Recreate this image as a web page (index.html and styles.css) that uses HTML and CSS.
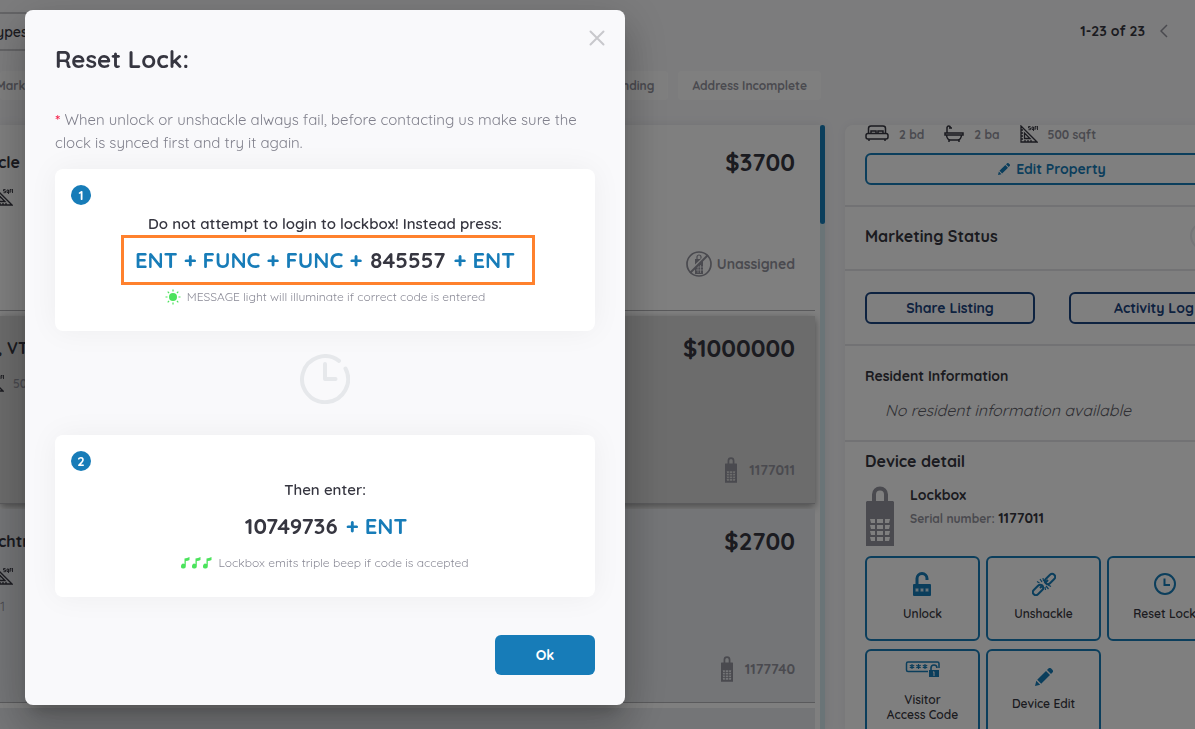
FILE: index.html
```html
<!DOCTYPE html>
<html lang="en">
<head>
    <meta charset="UTF-8">
    <meta name="viewport" content="width=device-width, initial-scale=1.0">
    <title>Reset Lock</title>
    <link rel="stylesheet" href="styles.css">
</head>
<body>
    <!-- shared icons -->
    <svg class="sprite" aria-hidden="true">
        <symbol id="lockbox" viewBox="0 0 28 60">
            <path d="M8 17V8.500a6 6 0 0 1 12 0V17" fill="none" stroke="currentColor" stroke-width="4"/>
            <path fill="currentColor" fill-rule="evenodd" d="M1 15h26l1 1v44H0V16zM4 33h5v4H5zM11 33h6v4h-6zM19 33h5l-1 4h-4zM4 39h5v4H5zM11 39h6v4h-6zM19 39h5l-1 4h-4zM4 45h5v4H5zM11 45h6v4h-6zM19 45h5l-1 4h-4zM4 51h5v4H5zM11 51h6v4h-6zM19 51h5l-1 4h-4z"/>
        </symbol>
        <symbol id="sqft" viewBox="0 0 18 18">
            <path d="M1 1v16h16zM4.500 8v5.500H10zM3 5H1M3 8H1M3 11H1M3 14H1M5 17v-2M8 17v-2M11 17v-2" fill="none" stroke="currentColor" stroke-width="1.300"/>
            <path d="M10.500 1.500H8.500v1.500h2v1.700h-2M13.500 4.500H12v-2.500h1.500v4M15 5V1.500h1.500M15 3h1.500M17.500 1v4" fill="none" stroke="currentColor" stroke-width=".9"/>
        </symbol>
        <symbol id="pencil" viewBox="0 0 18 18">
            <path fill="currentColor" d="M0 18l1.300-5.200 3.900 3.900zM2.200 11.800l8.800-8.800 4 4-8.800 8.800zM12 2l1.400-1.400a2 2 0 0 1 2.800 0L17.400 1.800a2 2 0 0 1 0 2.800L16 6z"/>
        </symbol>
        <symbol id="note" viewBox="0 0 9 12">
            <path fill="currentColor" d="M3.500 1.500Q6 1.200 8.500 0v3Q7 3.800 4.800 4v5a2.400 2.400 0 1 1-1.300-2z"/>
        </symbol>
    </svg>

    <div class="page">
        <header class="toolbar">
            <button class="type-filter">ypes</button>
            <div class="pager">
                <span>1-23 of 23</span>
                <button class="pager-prev" aria-label="Previous page">
                    <svg width="8" height="14" viewBox="0 0 8 14"><path d="M7 1L1 7l6 6" fill="none" stroke="currentColor" stroke-width="1.500"/></svg>
                </button>
            </div>
        </header>

        <div class="chips">
            <button class="chip chip-first">Mark</button>
            <button class="chip chip-push">Pending</button>
            <button class="chip">Address Incomplete</button>
        </div>

        <div class="content">
            <div class="list">
                <div class="rows">
                    <article class="row">
                        <div class="row-left">
                            <h3>cle N</h3>
                            <p class="row-size"><svg width="18" height="18"><use href="#sqft"/></svg></p>
                        </div>
                        <div class="row-right">
                            <span class="price">$3700</span>
                            <span class="device">
                                <svg width="26" height="26" viewBox="0 0 26 26">
                                    <path d="M11 8V6a2 2 0 0 1 4 0v2" fill="none" stroke="currentColor" stroke-width="1.200"/>
                                    <path d="M9 8h8v15H9z" fill="currentColor"/>
                                    <path d="M12 14v8M14.500 14v8M10 16h7M10 19h7" stroke="#fff" stroke-width=".7"/>
                                    <path d="M3 21L21 4" stroke="#fff" stroke-width="2.500"/>
                                    <path d="M4 22L22 4" stroke="currentColor" stroke-width="2"/>
                                    <circle cx="13" cy="13" r="12" fill="none" stroke="currentColor" stroke-width="1.700"/>
                                </svg>
                                Unassigned
                            </span>
                        </div>
                    </article>
                    <article class="row row-selected">
                        <div class="row-left">
                            <h3>, VT</h3>
                            <p class="row-size"><svg class="size-cut" width="18" height="18"><use href="#sqft"/></svg>50</p>
                        </div>
                        <div class="row-right">
                            <span class="price">$1000000</span>
                            <span class="device device-lock"><svg width="12" height="26"><use href="#lockbox"/></svg>1177011</span>
                        </div>
                    </article>
                    <article class="row row-alt">
                        <div class="row-left">
                            <h3>chtr</h3>
                            <p class="row-size"><svg width="18" height="18"><use href="#sqft"/></svg></p>
                            <p class="row-unit">1</p>
                        </div>
                        <div class="row-right">
                            <span class="price">$2700</span>
                            <span class="device device-lock"><svg width="12" height="26"><use href="#lockbox"/></svg>1177740</span>
                        </div>
                    </article>
                    <article class="row row-alt"></article>
                </div>
                <div class="scrollbar"><div class="scrollbar-thumb"></div></div>
            </div>

            <aside class="panel">
                <section class="summary">
                    <ul class="facts">
                        <li>
                            <svg width="24" height="18" viewBox="0 0 24 18" fill="none" stroke="currentColor" stroke-width="1.500">
                                <path d="M3.500 9V3.500a2.500 2.500 0 0 1 2.500-2.500h12a2.500 2.500 0 0 1 2.500 2.500V9M6 8V6h5v2M13 8V6h5v2M4 16v-2M20 16v-2"/>
                                <rect x="1" y="8.500" width="22" height="5.500" rx="2"/>
                            </svg>
                            2 bd
                        </li>
                        <li>
                            <svg width="20" height="18" viewBox="0 0 20 18" fill="none" stroke="currentColor" stroke-width="1.500">
                                <path d="M3 8V2.500a1.800 1.800 0 0 1 3.500 0M5 3h3M1 8h18v2H1zM2.500 10q.5 5 4 5h7q3.500 0 4-5M5 15v2M15 15v2"/>
                            </svg>
                            2 ba
                        </li>
                        <li><svg width="18" height="18"><use href="#sqft"/></svg>500 sqft</li>
                    </ul>
                    <button class="btn-outline btn-edit"><svg width="12" height="12"><use href="#pencil"/></svg>Edit Property</button>
                </section>

                <section class="marketing">
                    <label for="marketing-toggle">Marketing Status</label>
                    <input type="checkbox" id="marketing-toggle" class="toggle">
                </section>

                <section class="links">
                    <button class="btn-outline btn-navy">Share Listing</button>
                    <button class="btn-outline btn-navy">Activity Log</button>
                </section>

                <section class="resident">
                    <h2>Resident Information</h2>
                    <p>No resident information available</p>
                </section>

                <section class="device-detail">
                    <h2>Device detail</h2>
                    <div class="device-head">
                        <svg width="30" height="60" viewBox="0 0 28 60"><use href="#lockbox" width="28" height="60"/></svg>
                        <div>
                            <h3>Lockbox</h3>
                            <p>Serial number: <b>1177011</b></p>
                        </div>
                    </div>
                    <div class="tiles">
                        <button class="tile">
                            <svg width="20" height="24" viewBox="0 0 20 24">
                                <path d="M4 13V6.500a5 5 0 0 1 10 0V8" fill="none" stroke="currentColor" stroke-width="3"/>
                                <rect y="12" width="18" height="12" rx="1" fill="currentColor"/>
                                <path d="M4 16v4M2.300 17l3.400 2M5.700 17l-3.400 2M9 16v4M7.300 17l3.400 2M10.700 17l-3.400 2M14 16v4M12.300 17l3.400 2M15.700 17l-3.400 2" stroke="#fff" stroke-width=".8"/>
                            </svg>
                            <span>Unlock</span>
                        </button>
                        <button class="tile">
                            <svg width="24" height="24" viewBox="0 0 24 24" fill="none" stroke="currentColor" stroke-width="2">
                                <rect x="12" y="4" width="12" height="6" rx="3" transform="rotate(-45 18 7)"/>
                                <rect x="0" y="15" width="12" height="6" rx="3" transform="rotate(-45 6 18)"/>
                                <path d="M8 16l3-3M13 11l3-3"/>
                                <path stroke-width="1.200" d="M10 10L8 7M7.500 11L5 9.500M11.500 9L11 6M14 14l2.500 3M16 13l3 1.500M13 15l.5 3"/>
                            </svg>
                            <span>Unshackle</span>
                        </button>
                        <button class="tile">
                            <svg width="24" height="24" viewBox="0 0 24 24" fill="none" stroke="currentColor" stroke-width="2">
                                <circle cx="12" cy="12" r="10"/>
                                <path d="M11.500 6.500V13H17"/>
                            </svg>
                            <span>Reset Lock</span>
                        </button>
                        <button class="tile tile-tall">
                            <svg width="36" height="20" viewBox="0 0 36 20">
                                <path d="M34 8V3.500a1.500 1.500 0 0 0-1.500-1.500H3a1.500 1.500 0 0 0-1.500 1.500V10A1.500 1.500 0 0 0 3 11.500h20" fill="none" stroke="currentColor" stroke-width="1.500"/>
                                <path d="M7 4v5M4.800 5.200l4.400 2.600M9.200 5.200L4.800 7.800M13.500 4v5M11.300 5.200l4.400 2.600M15.700 5.200l-4.400 2.600M20 4v5M17.800 5.200l4.400 2.600M22.200 5.200l-4.400 2.600" stroke="currentColor" stroke-width="1.200"/>
                                <path d="M26 11V8a3 3 0 0 1 6 0" fill="none" stroke="currentColor" stroke-width="1.600"/>
                                <rect x="24" y="10" width="10" height="7" fill="currentColor"/>
                                <path d="M28 12.300l1-.6V16" fill="none" stroke="#fff"/>
                            </svg>
                            <span>Visitor<br>Access Code</span>
                        </button>
                        <button class="tile tile-edit">
                            <svg width="18" height="18"><use href="#pencil"/></svg>
                            <span>Device Edit</span>
                        </button>
                    </div>
                </section>
            </aside>
        </div>
    </div>

    <div class="overlay">
        <div class="modal" role="dialog" aria-labelledby="modal-title">
            <button class="close" aria-label="Close">
                <svg width="16" height="16" viewBox="0 0 16 16"><path d="M1.500 1.500l13 13M14.500 1.500l-13 13" stroke="currentColor" stroke-width="2" stroke-linecap="round"/></svg>
            </button>
            <h1 id="modal-title">Reset Lock:</h1>
            <p class="notice"><span class="star">*</span> When unlock or unshackle always fail, before contacting us make sure the clock is synced first and try it again.</p>

            <div class="step">
                <span class="step-number">1</span>
                <p class="step-text">Do not attempt to login to lockbox! Instead press:</p>
                <p class="step-code highlight">ENT + FUNC + FUNC + <b>845557</b> + ENT</p>
                <p class="step-hint">
                    <svg width="16" height="16" viewBox="0 0 16 16">
                        <circle cx="8" cy="8" r="4" fill="currentColor"/>
                        <path d="M8 .5v2M8 13.500v2M.5 8h2M13.500 8h2M2.700 2.700l1.400 1.400M11.900 11.900l1.400 1.400M2.700 13.300l1.400-1.400M11.900 4.100l1.400-1.400" stroke="currentColor" stroke-width="1.200"/>
                    </svg>
                    <span>MESSAGE light will illuminate if correct code is entered</span>
                </p>
            </div>

            <svg class="wait" width="50" height="50" viewBox="0 0 50 50" fill="none" stroke="currentColor" stroke-width="4" stroke-linecap="round" stroke-linejoin="round">
                <path d="M39 6.800A23 23 0 1 0 45.500 14.500"/>
                <path d="M25 10v15h10.500"/>
            </svg>

            <div class="step">
                <span class="step-number">2</span>
                <p class="step-text">Then enter:</p>
                <p class="step-code"><b>10749736</b> + ENT</p>
                <p class="step-hint">
                    <span class="notes">
                        <svg width="9" height="12"><use href="#note"/></svg>
                        <svg width="9" height="12"><use href="#note"/></svg>
                        <svg width="9" height="12"><use href="#note"/></svg>
                    </span>
                    <span>Lockbox emits triple beep if code is accepted</span>
                </p>
            </div>

            <div class="actions">
                <button class="btn-ok">Ok</button>
            </div>
        </div>
    </div>
</body>
</html>
```

FILE: styles.css
```css
* {
    box-sizing: border-box;
}
body {
    margin: 0;
    background-color: #f8f8fb;
    font-family: Quicksand, Lato, sans-serif;
    font-size: 16px;
    color: #363640;
    overflow: hidden;
}
h1, h2, h3, p, ul {
    margin: 0;
    padding: 0;
}
h1, h2, h3, b {
    font-weight: 700;
}
button {
    font-family: inherit;
    padding: 0;
    border: none;
    background: none;
    color: inherit;
    cursor: pointer;
}
svg {
    flex: none;
}
.sprite {
    display: none;
}

/* page behind the dialog */
.page {
    height: 100vh;
    overflow: hidden;
    display: flex;
    flex-direction: column;
}
.toolbar {
    display: flex;
    justify-content: space-between;
    align-items: center;
    height: 39px;
    margin-top: 12px;
    padding-right: 27px;
}
.type-filter {
    width: 200px;
    height: 39px;
    border: 2px solid #c8c8cc;
    border-left: none;
    text-align: left;
    text-indent: -4px;
    font-size: 14px;
    font-weight: 600;
}
.pager {
    display: flex;
    align-items: center;
    gap: 15px;
    padding-bottom: 2px;
    font-size: 14px;
    font-weight: 700;
}
.pager-prev {
    display: flex;
    color: #94949e;
}
.chips {
    display: flex;
    gap: 10px;
    width: 821px;
    margin: 20px 0 25px;
}
.chip {
    height: 29px;
    padding: 0 14px;
    border-radius: 4px;
    background-color: #fff;
    color: #94949e;
    font-size: 12px;
    font-weight: 700;
}
.chip-first {
    padding-left: 0;
    text-indent: -4px;
}
.chip-push {
    margin-left: auto;
}
.content {
    flex: 1;
    min-height: 0;
    display: flex;
    gap: 20px;
    margin-right: -64px;
}
.list {
    flex: 1;
    display: flex;
    gap: 5px;
    background-color: #fff;
    box-shadow: 0 0 10px rgba(0, 0, 0, 0.08);
}
.rows {
    flex: 1;
    display: flex;
    flex-direction: column;
    gap: 5px;
}
.row {
    flex: none;
    display: flex;
    justify-content: space-between;
    height: 188px;
    padding: 17px 20px 20px 0;
    border-bottom: 1px solid #b4b4b8;
}
.row:first-child {
    height: 186px;
    padding: 22px 20px 33px 0;
}
.row-selected {
    background-color: #d8d8d8;
    box-shadow: 0 3px 8px rgba(0, 0, 0, 0.4);
}
.row-alt {
    height: 194px;
    background-color: #e8eaee;
}
.row-left h3 {
    margin-top: 5px;
    font-size: 16px;
    line-height: 20px;
    text-indent: -2px;
}
.row-size {
    display: flex;
    align-items: center;
    gap: 9px;
    height: 18px;
    margin: 16px 0 0 -5px;
    font-size: 12px;
    font-weight: 600;
    color: #94949e;
}
.row-size svg {
    color: #363640;
}
.size-cut {
    margin-left: -9px;
}
.row-unit {
    margin-top: 12px;
    font-size: 14px;
    line-height: 18px;
    color: #94949e;
}
.row-right {
    display: flex;
    flex-direction: column;
    justify-content: space-between;
    align-items: flex-end;
}
.price {
    font-size: 24px;
    line-height: 30px;
    font-weight: 700;
}
.device {
    display: flex;
    align-items: center;
    gap: 5px;
    color: #94949e;
    font-size: 14px;
    font-weight: 700;
}
.device-lock {
    gap: 12px;
}
.scrollbar {
    width: 5px;
    background-color: #d4e8ef;
}
.scrollbar-thumb {
    height: 99px;
    border-radius: 3px;
    background-color: #177cb8;
}

/* property panel */
.panel {
    flex: 0 0 414px;
    border-radius: 8px 8px 0 0;
    background-color: #fff;
    box-shadow: 0 0 10px rgba(0, 0, 0, 0.06);
    overflow: hidden;
}
.panel section {
    padding: 0 20px;
    border-bottom: 2px solid #e4e4e8;
}
.facts {
    display: flex;
    gap: 20px;
    list-style: none;
    height: 18px;
    color: #94949e;
    font-size: 12px;
    font-weight: 700;
}
.facts li {
    display: flex;
    align-items: center;
    gap: 10px;
}
.facts svg {
    color: #363640;
}
.panel .summary {
    height: 82px;
}
.btn-outline {
    flex: 0 0 170px;
    height: 32px;
    border: 2px solid #177cb8;
    border-radius: 6px;
    color: #177cb8;
    font-size: 14px;
    font-weight: 700;
}
.btn-edit {
    display: flex;
    justify-content: center;
    align-items: center;
    gap: 6px;
    width: 100%;
    margin-top: 10px;
}
.btn-navy {
    border-color: #1b4480;
    color: #1b4480;
}
.panel .marketing {
    display: flex;
    justify-content: space-between;
    align-items: center;
    height: 64px;
    padding-bottom: 4px;
    font-size: 16px;
    font-weight: 700;
}
.toggle {
    appearance: none;
    width: 49px;
    height: 28px;
    margin: 0;
    border: 2px solid #ececf0;
    border-radius: 14px;
}
.panel .links {
    display: flex;
    justify-content: space-between;
    align-items: center;
    height: 75px;
}
.resident h2 {
    padding-top: 20px;
    font-size: 14px;
    line-height: 20px;
}
.resident p {
    padding: 13px 20px 19px;
    font-size: 16px;
    line-height: 22px;
    font-style: italic;
    color: #606068;
}
.panel .device-detail {
    border-bottom: none;
}
.device-detail h2 {
    padding-top: 8px;
    font-size: 16px;
    line-height: 22px;
}
.device-head {
    display: flex;
    gap: 15px;
    margin: 14px 0 10px;
    color: #94949e;
}
.device-head h3 {
    font-size: 14px;
    line-height: 18px;
    color: #363640;
}
.device-head p {
    margin-top: 5px;
    font-size: 12px;
    line-height: 18px;
    font-weight: 700;
}
.device-head b {
    font-size: 14px;
    color: #363640;
}
.tiles {
    display: grid;
    grid-template-columns: repeat(3, 115px);
    gap: 8px 6px;
}
.tile {
    display: flex;
    flex-direction: column;
    align-items: center;
    gap: 10px;
    height: 85px;
    padding-top: 14px;
    border: 2px solid #177cb8;
    border-radius: 6px;
    color: #177cb8;
    font-size: 12px;
    line-height: 15px;
    font-weight: 600;
}
.tile-tall {
    gap: 12px;
    padding-top: 9px;
}
.tile-edit {
    padding-top: 17px;
}
.tile span {
    color: #363640;
}

/* dialog */
.overlay {
    position: fixed;
    inset: 0;
    padding: 10px 25px;
    background-color: rgba(0, 0, 0, 0.5);
}
.modal {
    position: relative;
    max-width: 600px;
    padding: 30px;
    border-radius: 8px;
    background-color: #f9f9fb;
    box-shadow: 0 11px 15px -7px rgba(0, 0, 0, 0.2), 0 24px 38px 3px rgba(0, 0, 0, 0.14), 0 9px 46px 8px rgba(0, 0, 0, 0.12);
}
.close {
    position: absolute;
    top: 20px;
    right: 20px;
    display: flex;
    color: #c8c8cc;
}
.modal h1 {
    margin-top: 3px;
    font-size: 24px;
    line-height: 32px;
}
.notice {
    margin: 33px 0 15px;
    font-size: 15px;
    line-height: 23px;
    color: #80808c;
}
.star {
    color: #f5224b;
    font-weight: 700;
}
.step {
    position: relative;
    height: 162px;
    padding-top: 45px;
    border-radius: 8px;
    background-color: #fff;
    box-shadow: 0 0 30px rgba(0, 0, 0, 0.05);
    text-align: center;
}
.step-number {
    position: absolute;
    top: 16px;
    left: 16px;
    width: 20px;
    height: 20px;
    border-radius: 50%;
    background-color: #177cb8;
    color: #fff;
    font-size: 13px;
    line-height: 20px;
    font-weight: 700;
}
.step-text {
    font-size: 15px;
    line-height: 20px;
    font-weight: 600;
}
.step-code {
    width: fit-content;
    margin: 12px auto 13px;
    font-size: 22px;
    line-height: 28px;
    font-weight: 700;
    color: #177cb8;
}
.step-code b {
    margin: 0 2px;
    color: #363640;
}
.highlight {
    position: relative;
}
.highlight::after {
    content: "";
    position: absolute;
    inset: -11px -20px -11px -14px;
    border: 3px solid #ff812d;
}
.step-hint {
    display: flex;
    justify-content: center;
    align-items: center;
    gap: 6px;
    font-size: 12px;
    line-height: 20px;
    color: #8a8a96;
}
.step-hint svg {
    color: #4be35c;
}
.notes {
    display: flex;
    gap: 2px;
}
.wait {
    display: block;
    margin: 23px auto 31px;
    color: #e6e8eb;
}
.actions {
    display: flex;
    justify-content: flex-end;
    margin-top: 38px;
}
.btn-ok {
    width: 100px;
    height: 40px;
    border-radius: 6px;
    background-color: #177cb8;
    color: #fff;
    font-size: 14px;
    font-weight: 700;
}
```
